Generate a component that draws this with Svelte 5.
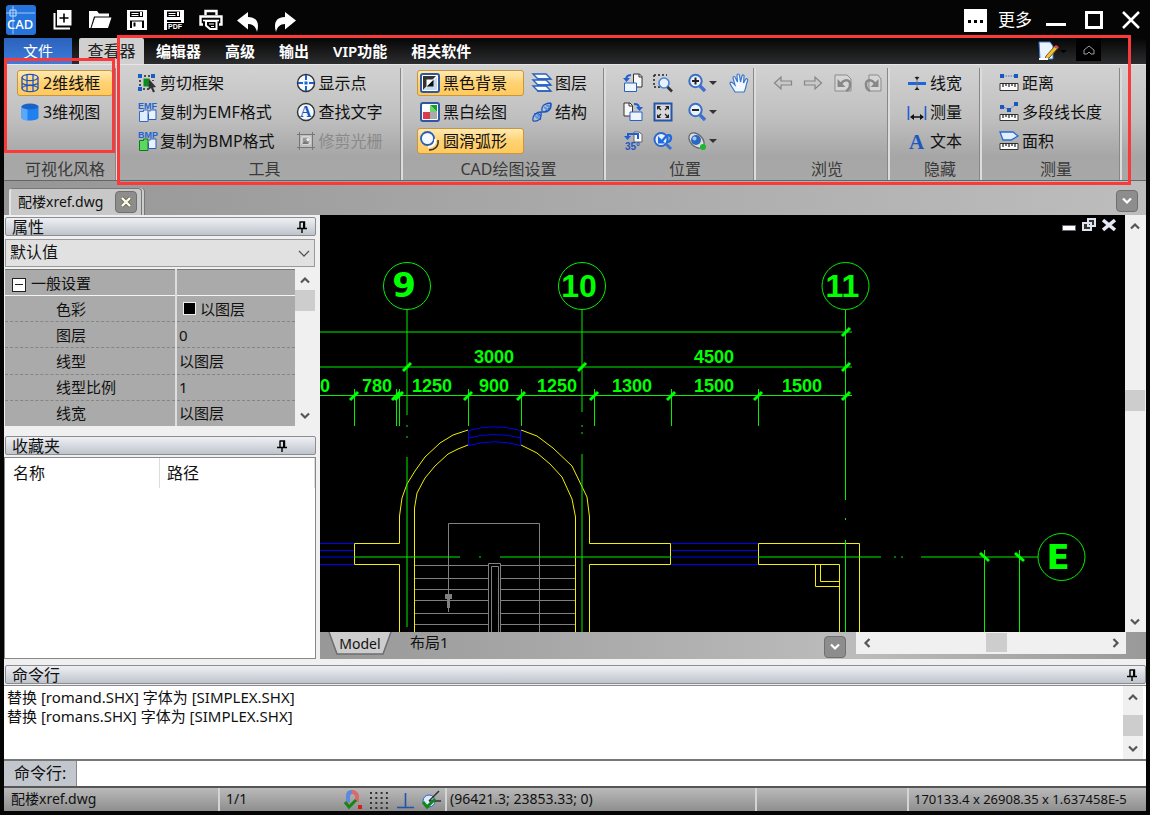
<script>
  let activeTab = $state('查看器');
  let command = $state('');
  let preset = $state('默认值');

  const tabs = ['查看器', '编辑器', '高级', '输出', 'VIP功能', '相关软件'];

  const quick = [
    { icon: 'new', label: '新建' },
    { icon: 'open', label: '打开' },
    { icon: 'save', label: '保存' },
    { icon: 'pdf', label: '保存为PDF' },
    { icon: 'print', label: '打印' },
    { icon: 'undo', label: '撤销' },
    { icon: 'redo', label: '重做' },
  ];

  const groups = [
    {
      name: 'style', title: '可视化风格', columns: [
        [{ icon: 'wire', text: '2维线框', on: true }, { icon: 'solid', text: '3维视图' }],
      ],
    },
    {
      name: 'tools', title: '工具', columns: [
        [{ icon: 'clip', text: '剪切框架' }, { icon: 'emf', text: '复制为EMF格式' }, { icon: 'bmp', text: '复制为BMP格式' }],
        [{ icon: 'point', text: '显示点' }, { icon: 'find', text: '查找文字' }, { icon: 'raster', text: '修剪光栅', disabled: true }],
      ],
    },
    {
      name: 'settings', title: 'CAD绘图设置', columns: [
        [{ icon: 'black', text: '黑色背景', on: true }, { icon: 'mono', text: '黑白绘图' }, { icon: 'smooth', text: '圆滑弧形', on: true }],
        [{ icon: 'layers', text: '图层' }, { icon: 'structure', text: '结构' }],
      ],
    },
    {
      name: 'position', title: '位置', icons: [
        { icon: 'rotLeft', text: '向左旋转' }, { icon: 'zoomWin', text: '窗口缩放' }, { icon: 'zoomIn', text: '放大', menu: true }, { icon: 'hand', text: '平移' },
        { icon: 'rotRight', text: '向右旋转' }, { icon: 'fit', text: '适合窗口' }, { icon: 'zoomOut', text: '缩小', menu: true }, null,
        { icon: 'angle', text: '旋转角度' }, { icon: 'zoomPrev', text: '上次缩放' }, { icon: 'orbit', text: '视图', menu: true }, null,
      ],
    },
    {
      name: 'browse', title: '浏览', icons: [
        { icon: 'back', text: '后退', disabled: true }, { icon: 'forward', text: '前进', disabled: true },
        { icon: 'prev', text: '上一视图', disabled: true }, { icon: 'next', text: '下一视图', disabled: true },
      ],
    },
    {
      name: 'hide', title: '隐藏', columns: [
        [{ icon: 'weight', text: '线宽' }, { icon: 'dim', text: '测量' }, { icon: 'text', text: '文本' }],
      ],
    },
    {
      name: 'measure', title: '测量', columns: [
        [{ icon: 'distance', text: '距离' }, { icon: 'polyline', text: '多段线长度' }, { icon: 'area', text: '面积' }],
      ],
    },
  ];

  const properties = [
    { name: '色彩', value: '以图层', swatch: true },
    { name: '图层', value: '0' },
    { name: '线型', value: '以图层' },
    { name: '线型比例', value: '1' },
    { name: '线宽', value: '以图层' },
  ];

  const log = [
    '替换 [romand.SHX] 字体为 [SIMPLEX.SHX]',
    '替换 [romans.SHX] 字体为 [SIMPLEX.SHX]',
  ];

  // drawing data
  const axes = [
    { x: 407, label: '9', font: 'wide', end: 415 },
    { x: 582, label: '10', end: 412 },
    { x: 845.5, label: '11', end: 500 },
  ];
  const dims = [
    { x: 494, y: 363, t: '3000' }, { x: 714, y: 363, t: '4500' },
    { x: 377, y: 392, t: '780' }, { x: 432, y: 392, t: '1250' }, { x: 494, y: 392, t: '900' },
    { x: 557, y: 392, t: '1250' }, { x: 632, y: 392, t: '1300' }, { x: 714, y: 392, t: '1500' },
    { x: 802, y: 392, t: '1500' },
  ];
  const drops = [354, 396, 399, 468, 521, 594, 671, 758];
  const ticks = [
    ...drops.map((x) => [x, 396]), [846, 396], [407, 367], [582, 367], [846, 367], [846, 332],
  ];
  const stairs = [565, 578, 589, 600, 613, 624];

  const thin = 'fill="none" stroke="#1f55c0" stroke-width="1.3"';
  const small = 'font-weight="700" font-family="Liberation Sans, sans-serif"';
  const lens = '<circle cx="8.500" cy="8" r="6.200" fill="#e8f2ff" stroke="#3c6fc4" stroke-width="2"/><path d="M13 13l5 5" stroke="#3a70d0" stroke-width="3.400"/>';
  const ruler = (y, h) => `<path d="M1 ${y}.5h18v${h}H1z" fill="#fafafa" stroke="#333"/><path d="M4 ${y}v4M7 ${y}v3M10 ${y}v4M13 ${y}v3M16 ${y}v4" stroke="#222" stroke-width="1.200"/>`;
  const pages = (c, s) => `<path d="M2.500 9.500h4V8H11v11.500H2.500z" fill="${c}" stroke="${s}"/><path d="M13 9.500V8h6v9.500h-7.500v-6" fill="#eaf2ff" stroke="#2a5cc0"/>`;

  const icons = {
    new: '<path d="M6 2h14.500v15.500H6z" fill="#fff"/><path d="M13 5.500v9M8.500 10h9" stroke="#000" stroke-width="1.600"/><path d="M3.500 5v15.500H19" fill="none" stroke="#fff" stroke-width="2"/>',
    open: '<path d="M1 20V3h8l2 2.500h10v3H6L2.500 20z" fill="#fff"/><path d="M7 9.500h16.500L20 20H3.500z" fill="#fff"/>',
    save: '<path d="M2 2h20v20H2z" fill="#fff"/><path d="M5 3.500h13V9H5zM5 12.500h14V20H5z" fill="#000"/><path d="M6.500 5h7v1h-7zM6.500 7h7v1h-7zM15 4h2v4h-2zM7 13.500h10V20H7z" fill="#fff"/><path d="M9.500 14.500v4" stroke="#000" stroke-width="2"/>',
    pdf: '<path d="M2 2h20v20H2z" fill="#fff"/><path d="M5 3.500h13V9H5zM5 12h14v2H5z" fill="#000"/><path d="M6.500 5h7v1h-7zM6.500 7h7v1h-7zM15 4h2v4h-2z" fill="#fff"/><path d="M5 15h17v7H5z" fill="#000"/><text x="6" y="21" font-size="7" ' + small + ' fill="#fff">PDF</text>',
    print: '<path d="M6.500 7V3h11v4M4 16.500H1.500V8.500h21v8H20" fill="none" stroke="#fff" stroke-width="2.400"/><path d="M7 13h10.500v8H11l-4-3.500z" fill="#000" stroke="#fff" stroke-width="2"/><path d="M4 12.500h16" stroke="#fff" stroke-width="1.600"/><path d="M10 16h5M12 18.500h3" stroke="#fff"/>',
    undo: '<path d="M12 4v5c8 0 12 5 9 15-1-5-4-8-9-8v5.500L1 12.500z" fill="#fff"/>',
    redo: '<path d="M12 4v5C4 9 0 14 3 24c1-5 4-8 9-8v5.500l11-9z" fill="#fff"/>',
    wire: `<ellipse cx="10" cy="4.500" rx="8" ry="3.200" ${thin}/><ellipse cx="10" cy="15.500" rx="8" ry="3.200" ${thin}/><path d="M2 4.500v11M18 4.500v11M7 1.500v17M13 1.500v17M2 10c3 3 13 3 16 0" ${thin}/>`,
    solid: '<path d="M1.500 4.500v11c0 4 17 4 17 0v-11z" fill="#1f80f0"/><path d="M1.500 4.500v11c0 2 3 3 6 3v-12z" fill="#59a8ff"/><ellipse cx="10" cy="4.500" rx="8.500" ry="3" fill="#1a62c8"/>',
    clip: '<path d="M3 3h13M3 3v13h9M16 3v5" fill="none" stroke="#222" stroke-dasharray="2 2" stroke-width="1.500"/><path d="M1 1h4v4H1zM14 1h4v4h-4zM1 14h4v4H1z" fill="#1d5cc8"/><path d="M6.500 5.500h6v8h-6z" fill="#0b8a1e"/><path d="M12 6l7 8-3 .5 2 4-2 1-2-4.500-2.500 2z" fill="#333"/>',
    emf: `<text x="1" y="7" font-size="9" ${small} fill="#1f66d0">EMF</text>` + pages('#e0edff', '#3568c8'),
    bmp: `<text x="1" y="7" font-size="9" ${small} fill="#1f66d0">BMP</text>` + pages('#5ad860', '#0f7a20'),
    point: '<circle cx="10" cy="10" r="8.500" fill="#f4f9ff" stroke="#333" stroke-width="1.400"/><path d="M10 2v5M10 13v5M2 10h5M13 10h5" stroke="#1f60d0" stroke-width="2"/><path d="M8.500 8.500h3v3h-3z" fill="#1f60d0"/>',
    find: '<circle cx="10" cy="10" r="8.500" fill="#f4f9ff" stroke="#333" stroke-width="1.400"/><text x="4" y="15" font-size="16" font-weight="700" font-family="Liberation Serif, serif" fill="#1c57c0">A</text>',
    raster: '<path d="M3.500 1v18M1 3.500h18M16.500 1v18M1 16.500h18" fill="none" stroke="#777"/><path d="M4 4h12v12H4z" fill="#bdbdbd"/><path d="M6 6h8v7H6z" fill="#999" stroke="#eee"/><circle cx="12" cy="8.500" r="1.500" fill="#eee"/><path d="M6 13l3-3 4 3z" fill="#777"/>',
    black: '<rect x="1" y="1" width="18" height="18" rx="2" fill="#fff" stroke="#2e57a0" stroke-width="2"/><path d="M3 3h13L3 17z" fill="#333"/><path d="M17 4v13H4z" fill="#c4d8ee"/><path d="M6.500 13.500l7-7v7z" fill="#111"/><path d="M6.500 13.500l7-7h-7z" fill="#fff"/>',
    mono: '<rect x="1" y="1" width="18" height="18" rx="2" fill="#fff" stroke="#2e57a0" stroke-width="2"/><path d="M3 10h7v7H3z" fill="#d93c4a"/><path d="M10 10h7v7h-7z" fill="#aaa"/><path d="M10 3h7v7z" fill="#16a02c"/><path d="M10 3v7h7z" fill="#6bd46d"/>',
    smooth: '<circle cx="7.500" cy="7.500" r="6.500" fill="#f4f9ff" stroke="#2a5db8" stroke-width="1.800"/><path d="M15 8c1 5-2 8-7 8" fill="none" stroke="#fff" stroke-width="2"/><path d="M18 9c1 6-3 10-9 10" fill="none" stroke="#333" stroke-width="1.500"/>',
    layers: [1, 7, 13].map((y) => `<path d="M1 ${y}h13l5 5H6z" fill="#f8fbff" stroke="#2a62be" stroke-width="1.400"/><path d="M5 ${y + 5}h14" stroke="#2a62be" stroke-width="1.500"/>`).join(''),
    structure: `<path d="M1 19c-1-6 4-9 8-9s9-2 10-9M2 12c4-2 8 1 6 6M10 9c-1-6 4-8 9-8M19 1c1 6-3 10-8 9M1 19c6 1 9-3 8-9" ${thin}/><path d="M3 14l4 3M5 12l3 3M12 5l4 3M14 3l4 2" stroke="#5990e8" stroke-width="2"/>`,
    rotLeft: '<path d="M10.500 1h6l2.500 2.500V14h-8.500z" fill="#f8f8f8" stroke="#333"/><path d="M16 1v3h3" fill="none" stroke="#333"/><path d="M1.500 10h12v8.500h-12z" fill="#eef5ff" stroke="#2a62be"/><path d="M8 2C5 2 3 3 3 7" fill="none" stroke="#1f5fd0" stroke-width="2"/><path d="M0 5h7L3.500 9z" fill="#1f5fd0"/>',
    rotRight: '<path d="M1 1h6l2.500 2.500V14H1z" fill="#f8f8f8" stroke="#333"/><path d="M6 1v3h3" fill="none" stroke="#333"/><path d="M7 10h12v8.500H7z" fill="#eef5ff" stroke="#2a62be"/><path d="M11 2c4 0 5 1 5 5" fill="none" stroke="#1f5fd0" stroke-width="2"/><path d="M13 5h7l-3.500 4z" fill="#1f5fd0"/>',
    angle: '<path d="M11 1h5l3 2.500V11h-8z" fill="#f8f8f8" stroke="#666"/><path d="M15 8V3H5v3" fill="none" stroke="#1f5fd0" stroke-width="2"/><path d="M1 5h7L4.500 9z" fill="#1f5fd0"/><text x="2" y="19" font-size="10" ' + small + ' fill="#1f55c0">35°</text>',
    zoomWin: '<path d="M1 2h13M1 2v12h7" fill="none" stroke="#222" stroke-dasharray="2 2" stroke-width="1.500"/><circle cx="11" cy="10" r="5" fill="#e8f2ff" stroke="#4a86dc" stroke-width="1.600"/><path d="M14.500 14l4.500 4.500" stroke="#333" stroke-width="2.600"/>',
    fit: '<path d="M1.500 1.500h17v17h-17z" fill="#d8d8d8" stroke="#2455a8" stroke-width="2"/><path d="M4 4h4L4 8zM16 4v4l-4-4zM4 16v-4l4 4zM16 16h-4l4-4z" fill="#222"/><path d="M5 5l3 3M15 5l-3 3M5 15l3-3M15 15l-3-3" stroke="#222" stroke-width="1.200"/>',
    zoomPrev: '<circle cx="8" cy="8.500" r="6.500" fill="#e8f2ff" stroke="#2a68d0" stroke-width="2"/><path d="M13 13l5 5" stroke="#3a70d0" stroke-width="3"/><path d="M9 10l3.500-4C15 3 18 4 18 7s-2 4-4 4" fill="none" stroke="#1f6be0" stroke-width="2.400"/><path d="M5 5v7.500h7.500z" fill="#1f6be0"/>',
    zoomIn: lens + '<path d="M8.500 4.500v7M5 8h7" stroke="#222" stroke-width="2"/>',
    zoomOut: lens + '<path d="M5 8h7" stroke="#222" stroke-width="2"/>',
    orbit: '<ellipse cx="9.500" cy="9.500" rx="9" ry="6" transform="rotate(45 9.500 9.500)" fill="#ddd" stroke="#666" stroke-width="1.300"/><circle cx="9" cy="9" r="5" fill="#2a68c0"/><circle cx="7.500" cy="7.500" r="2" fill="#9cc8ff"/><circle cx="16" cy="16" r="3" fill="#18b830"/>',
    hand: '<path d="M6 19C4 15 1 12 1 10c1-2 3 0 5 2L4 5c0-2 2-2 2.500 0L8.500 9 8 2.500c0-2 2-2 2.500 0L11.500 9l1.500-6c.5-2 2.500-1 2 .5L14.500 10l2-3.500c1-1.500 3-.5 2 1.500C16.500 13 17 16 15 19z" fill="#f2f8ff" stroke="#3c76cc" stroke-width="1.200"/>',
    back: '<path d="M1.500 10L8 4v4h10.500v4H8v4z" fill="#c8c8c8" stroke="#858585" stroke-width="1.200"/>',
    forward: '<path d="M18.500 10L12 4v4H1.500v4H12v4z" fill="#c8c8c8" stroke="#858585" stroke-width="1.200"/>',
    prev: '<path d="M2 2h12l4 4v12H2z" fill="#d6d6d6" stroke="#8b8b8b"/><path d="M7 13c3-8 11-7 10-1 0 3-2 5-4 6" fill="none" stroke="#888" stroke-width="2.500"/><path d="M4.500 6v8h8z" fill="#888"/>',
    next: '<path d="M6 2h9l3 4v12H6z" fill="#d6d6d6" stroke="#8b8b8b"/><path d="M13 13C10 5 2 6 3 12c0 3 2 5 4 6" fill="none" stroke="#888" stroke-width="2.500"/><path d="M15.500 6v8h-8z" fill="#888"/>',
    weight: '<path d="M1 9h18v3H1z" fill="#1f66d8"/><path d="M10 3v14" stroke="#777"/><path d="M7.500 4h5L10 7zM7.500 17h5L10 14z" fill="#222"/>',
    dim: '<path d="M1.500 4v14M18.500 4v14" stroke="#1f5fd0" stroke-width="1.600"/><path d="M4 15h12" stroke="#111" stroke-width="1.500"/><path d="M3 15l4-3v6zM17 15l-4-3v6z" fill="#111"/>',
    text: '<text x="2" y="18" font-size="21" font-weight="700" font-family="Liberation Serif, serif" fill="#1c57c0">A</text>',
    distance: '<path d="M4 3h12" stroke="#3a78d8" stroke-dasharray="1.500 1"/><path d="M1 1h4v4H1zM15 1h4v4h-4z" fill="#1c57c0"/>' + ruler(10, 7),
    polyline: '<path d="M3 4l7 4 7-6" fill="none" stroke="#3a78d8" stroke-dasharray="1.500 1"/><path d="M1 3h4v4H1zM8 6h4v4H8zM15 0h4v4h-4z" fill="#1c57c0"/>' + ruler(12, 6),
    area: '<path d="M1 1h13l5 4-7 4H4z" fill="#e2efff" stroke="#2a68d0" stroke-width="1.300"/>' + ruler(12, 6),
  };
</script>

{#snippet icon(name, box = 20)}
  <svg class="icon" width={box} height={box} viewBox="0 0 {box} {box}" aria-hidden="true">{@html icons[name]}</svg>
{/snippet}

{#snippet chevron(dir)}
  <svg class="chevron {dir}" width="12" height="12" viewBox="0 0 12 12" aria-hidden="true">
    <path d="M2 8.500L6 4.500l4 4" fill="none" stroke="currentColor" stroke-width="2.200" />
  </svg>
{/snippet}

{#snippet pin()}
  <button class="pin" aria-label="固定">
    <svg width="10" height="12" viewBox="0 0 10 12">
      <path d="M2.500 1h5v6M3 1v6M0 7.500h10M5 8v4" fill="none" stroke="#000" stroke-width="1.400" />
      <path d="M6 1h2v6H6z" />
    </svg>
  </button>
{/snippet}

<div class="app">
  <header class="titlebar">
    <svg class="logo" width="30" height="30" viewBox="0 0 30 30" aria-hidden="true">
      <rect width="30" height="30" rx="3" fill="#2474dc" />
      <path d="M0 8h29M7 1v28" stroke="#9cc8ff" />
      <path d="M4 5h6v6H4z" fill="none" stroke="#c4e0ff" />
      <text x="1" y="24" font-size="13" font-weight="500" fill="#fff" font-family="Noto Sans, sans-serif">CAD</text>
    </svg>
    <div class="quick">
      {#each quick as q}
        <button aria-label={q.label}>{@render icon(q.icon, 24)}</button>
      {/each}
    </div>
    <div class="window-buttons">
      <button class="more">
        <svg width="23" height="23" viewBox="0 0 23 23" aria-hidden="true">
          <path d="M0 0h23v23H0z" fill="#fff" />
          <path d="M4 11h3v3H4zM10 11h3v3h-3zM16 11h3v3h-3z" fill="#000" />
        </svg>
        更多
      </button>
      <button aria-label="最小化"><svg width="20" height="20"><path d="M0 14.500h20" stroke="#fff" stroke-width="3" /></svg></button>
      <button aria-label="最大化"><svg width="18" height="18"><path d="M1.500 1.500h15v15h-15z" fill="none" stroke="#fff" stroke-width="3" /></svg></button>
      <button aria-label="关闭"><svg width="18" height="18"><path d="M1 1l16 16M17 1L1 17" stroke="#fff" stroke-width="2.500" /></svg></button>
    </div>
  </header>

  <div class="ribbon">
    <nav class="tabs">
      <button class="file">文件</button>
      {#each tabs as tab}
        <button class:active={tab === activeTab} onclick={() => (activeTab = tab)}>{tab}</button>
      {/each}
      <div class="tab-tools">
        <button aria-label="样式">
          <svg width="30" height="20" viewBox="0 0 30 20">
            <path d="M2 1h11l3 4v13H3z" fill="#eaf4ff" stroke="#3a78d0" />
            <path d="M9 15L18 5l3 2-9 10-4 1z" fill="#f2c230" stroke="#775b18" />
            <path d="M17 6l2-2 3 2-2 2z" fill="#e04848" />
            <path d="M2 18h9" stroke="#fff" stroke-width="2" />
            <path d="M23 9h7l-3.500 3z" fill="#000" />
          </svg>
        </button>
        <button class="collapse" aria-label="折叠功能区">
          <svg width="12" height="12" viewBox="0 0 12 12"><path d="M1 6l5-4 5 4M1 6v4h3l2-2 2 2h3V6" fill="none" stroke="#999" /></svg>
        </button>
      </div>
    </nav>
    <div class="panel">
      {#each groups as g}
        <section class="group {g.name}">
          <div class="items">
            {#if g.columns}
              {#each g.columns as col}
                <div class="column">
                  {#each col as item}
                    <button class="command" class:on={item.on} disabled={item.disabled}>
                      {@render icon(item.icon)}{item.text}
                    </button>
                  {/each}
                </div>
              {/each}
            {:else}
              {#each g.icons as item}
                {#if item}
                  <button class="icon-button" aria-label={item.text} disabled={item.disabled}>
                    {@render icon(item.icon)}
                    {#if item.menu}<span class="caret"></span>{/if}
                  </button>
                {:else}
                  <span></span>
                {/if}
              {/each}
            {/if}
          </div>
          <h2>{g.title}</h2>
        </section>
      {/each}
    </div>
    <div class="mark mark-style"></div>
    <div class="mark mark-groups"></div>
  </div>

  <div class="documents">
    <div class="doc-tab">
      配楼xref.dwg
      <button class="small-button" aria-label="关闭文档">
        <svg width="12" height="12"><path d="M2 2l8 8M10 2l-8 8" stroke="#77703f" stroke-width="4" /><path d="M2 2l8 8M10 2l-8 8" stroke="#fff" stroke-width="2.200" /></svg>
      </button>
    </div>
    <button class="small-button" aria-label="文档列表">{@render chevron('down')}</button>
  </div>

  <main>
    <aside>
      <div class="caption"><h3>属性</h3>{@render pin()}</div>
      <div class="preset">
        <select bind:value={preset} aria-label="对象">
          <option>默认值</option>
        </select>
        <svg width="12" height="12" viewBox="0 0 12 12"><path d="M1 4l5 5 5-5" fill="none" stroke="#555" stroke-width="1.300" /></svg>
      </div>
      <div class="grid-box">
        <table class="properties">
          <thead>
            <tr><th><button class="fold" aria-label="折叠"></button>一般设置</th><th></th></tr>
          </thead>
          <tbody>
            {#each properties as p}
              <tr>
                <td>{p.name}</td>
                <td>{#if p.swatch}<span class="swatch"></span>{/if}{p.value}</td>
              </tr>
            {/each}
          </tbody>
        </table>
        <div class="scroll">
          <button aria-label="向上">{@render chevron('up')}</button>
          <div class="thumb"></div>
          <button class="last" aria-label="向下">{@render chevron('down')}</button>
        </div>
      </div>
      <div class="caption favourites-caption"><h3>收藏夹</h3>{@render pin()}</div>
      <div class="favourites">
        <table>
          <thead><tr><th>名称</th><th>路径</th></tr></thead>
        </table>
      </div>
    </aside>

    <div class="view">
      <div class="canvas">
        <svg class="drawing" viewBox="320 215 805 417" preserveAspectRatio="xMinYMin slice">
          <g stroke="#0000f0" fill="none">
            <path d="M320 543.500h34M320 550.500h34M320 564.500h34M671 543.500h87M671 550.500h87M671 564.500h87" />
            <path d="M468.500 430.500Q495 423 520.500 430.500V445.500Q495 438 468.500 445.500zM468.500 438Q495 431 520.500 438" />
          </g>
          <g stroke="#808080" fill="none">
            <path d="M448.500 612V523.500H539.500V632" />
            {#each stairs as y}
              <path d="M415 {y}.500H488M501 {y}.500H575" />
            {/each}
            <path d="M488.500 632V563.500H500.500V632M491.500 632V566.500H498.500V632" />
            <path d="M445 594h7v5h-2v9h-3v-9h-2z" fill="#808080" stroke="none" />
          </g>
          <g stroke="#f0f000" fill="none">
            <path d="M354.500 543.500H399.500V516L402 498L407 484L415 471L425 457L440 443L453 435L468 430" />
            <path d="M354.500 543.500V564.500H399.500V632" />
            <path d="M414.500 632V508L417 493L425 478L435 466L448 454L458 449L468 445" />
            <path d="M521 430L537 436L553 448L572 466L587 497L589.500 517V543.500H670.500V564.500H589.500V632" />
            <path d="M521 445L537 453L550 464L562 477L572 499L575.500 517V632" />
            <path d="M839.500 632V564.500H758.500V543.500H859.500V632" />
            <path d="M815.500 564.500V586.500H839.500M820.500 564.500V581.500H839.500" />
          </g>
          <g stroke="#00f000" fill="none">
            {#each axes as a}
              <circle cx={a.x} cy="286" r="23.500" />
              <path d="M{a.x} 310V{a.end}" />
            {/each}
            <path d="M407 425v2M407 436v2M407 457V627M582 425v2M582 432v2M582 454V632M845.500 518v2M845.500 540V632" />
            <path d="M320 332H852M320 367H852" />
            <path d="M320 395.500H852" />
            <path d="M354 557H460M479 557h2M500 557H671M758 557H881M894 557h2M901 557h2M921 557H1038" />
            {#each drops as x}
              <path d="M{x}.500 389V426" />
            {/each}
            <path d="M984.500 550V632M1019.500 550V632" />
            <circle cx="1061.500" cy="557" r="23.500" />
          </g>
          <path d="M320 557H354M671 557H758" stroke="#0000f0" />
          <g stroke="#00ff00" stroke-width="3">
            {#each ticks as [x, y]}
              <path d="M{x - 4} {y + 4}L{x + 4} {y - 4}" />
            {/each}
            <path d="M980 553L989 561M1015 553L1024 561" />
          </g>
          <g class="numbers">
            <text x="320" y="392">0</text>
            {#each dims as d}
              <text x={d.x} y={d.y} text-anchor="middle">{d.t}</text>
            {/each}
          </g>
          <g class="bubbles">
            {#each axes as a}
              <text class:wide={a.font} x={a.x - 3} y="297" text-anchor="middle">{a.label}</text>
            {/each}
            <text class="wide" x="1058" y="569" text-anchor="middle">E</text>
          </g>
        </svg>
        <div class="mdi">
          <button aria-label="最小化视图"><svg width="14" height="14"><path d="M.5 7.500h13v5H.5z" fill="#fff" stroke="#667" /></svg></button>
          <button aria-label="还原视图"><svg width="14" height="14"><path d="M6 1h7v7H6zM1 5h8v7H1z" fill="#333" stroke="#dde3f0" stroke-width="2" /></svg></button>
          <button aria-label="关闭视图"><svg width="14" height="14"><path d="M1 2l12 10M13 2L1 12" stroke="#e4e9f5" stroke-width="3.500" /></svg></button>
        </div>
      </div>
      <div class="scroll vertical">
        <button aria-label="向上">{@render chevron('up')}</button>
        <div class="thumb"></div>
        <button class="last" aria-label="向下">{@render chevron('down')}</button>
      </div>
      <div class="layouts">
        <button class="model">
          <svg width="64" height="24" viewBox="0 0 64 24" aria-hidden="true"><path d="M1 0l8 22h46l8-22" fill="#cdcdcd" stroke="#6d6d6d" stroke-width="1.500" /></svg>
          <span>Model</span>
        </button>
        <button class="layout">布局1</button>
        <button class="small-button" aria-label="布局列表">{@render chevron('down')}</button>
        <div class="scroll-h">
          <button aria-label="向左">{@render chevron('left')}</button>
          <div class="thumb"></div>
          <button class="last" aria-label="向右">{@render chevron('right')}</button>
        </div>
      </div>
    </div>
  </main>

  <div class="console">
    <div class="caption"><h3>命令行</h3>{@render pin()}</div>
    <div class="log">
      <div>
        {#each log as line}
          <p>{line}</p>
        {/each}
      </div>
      <div class="scroll">
        <button aria-label="向上">{@render chevron('up')}</button>
        <div class="thumb"></div>
        <button class="last" aria-label="向下">{@render chevron('down')}</button>
      </div>
    </div>
    <div class="prompt">
      <label for="command">命令行:</label>
      <input id="command" type="text" bind:value={command} />
    </div>
  </div>

  <footer>
    <span class="file-name">配楼xref.dwg</span>
    <span class="page">1/1</span>
    <div class="toggles">
      <button aria-label="对象捕捉">
        <svg width="20" height="20"><path d="M5 13V6q0-4 4-4t5 4v6" fill="none" stroke="#d86a6a" stroke-width="4" /><path d="M5 12V6q0-4 4-4" fill="none" stroke="#5b8be0" stroke-width="4" /><path d="M2 12l4 5 7-7" fill="none" stroke="#12861c" stroke-width="3" /><path d="M15 15h4v4h-4z" fill="#d81e1e" /></svg>
      </button>
      <button aria-label="栅格">
        <svg width="20" height="20"><path d="M1 3h18M1 8h18M1 13h18M1 18h18" stroke="#333" stroke-width="2" stroke-dasharray="2 3.300" /></svg>
      </button>
      <button aria-label="正交">
        <svg width="20" height="20"><path d="M10.500 3v14M2 17.500h17" stroke="#1f55b0" stroke-width="1.600" /></svg>
      </button>
      <button aria-label="极轴追踪">
        <svg width="20" height="20"><circle cx="8" cy="11" r="6" fill="#dcecff" stroke="#2a62be" /><path d="M8 11L18 1M8 11h12" stroke="#333" stroke-width="1.500" /><path d="M2 12l4 5 8-8" fill="none" stroke="#12861c" stroke-width="3" /></svg>
      </button>
    </div>
    <span class="coords">(96421.3; 23853.33; 0)</span>
    <span class="blank"></span>
    <span class="extents">170133.4 x 26908.35 x 1.637458E-5</span>
  </footer>
</div>

<style>
  :global(body) {
    margin: 0;
    background: #050505;
  }

  .app {
    box-sizing: border-box;
    min-height: 100vh;
    display: flex;
    flex-direction: column;
    padding-bottom: 4px;
    background: #050505;
    color: #111;
    font: 16px/20px 'Noto Sans', 'Noto Sans CJK SC', sans-serif;
  }

  button {
    display: inline-flex;
    align-items: center;
    justify-content: center;
    padding: 0;
    border: 0;
    background: none;
    color: inherit;
    font: inherit;
    white-space: nowrap;
  }

  svg {
    display: block;
    flex: none;
  }

  .icon {
    overflow: visible;
  }

  h2,
  h3,
  p {
    margin: 0;
    font-size: 16px;
    font-weight: 400;
  }

  /* title bar */
  .titlebar {
    display: flex;
    align-items: center;
    height: 38px;
    padding: 2px 10px 0 6px;
    box-sizing: border-box;
    color: #fff;
  }

  .quick {
    display: flex;
    gap: 13px;
    margin-left: 15px;
  }

  .window-buttons {
    display: flex;
    align-items: center;
    gap: 19px;
    margin-left: auto;
  }

  .more {
    gap: 11px;
    margin-right: -5px;
    font-size: 17px;
  }

  /* ribbon */
  .ribbon {
    position: relative;
  }

  .tabs {
    display: flex;
    height: 26px;
    margin: 0 4px;
    background: linear-gradient(#060606, #2c2d2f);
    color: #fff;
    font-size: 15px;
  }

  .tabs > button {
    padding: 0 12px;
    font-weight: 600;
  }

  .tabs > .file {
    width: 68px;
    margin-right: 7px;
    background: linear-gradient(#2c62bc, #3c7cdc);
    font-weight: 400;
  }

  .tabs > .active {
    width: 65px;
    padding: 0;
    border-radius: 2px 2px 0 0;
    background: #d0d0d0;
    color: #222;
    font-weight: 400;
    font-size: 16px;
  }

  .tab-tools {
    display: flex;
    gap: 9px;
    margin-left: auto;
    padding-right: 45px;
  }

  .collapse {
    width: 25px;
    height: 23px;
    background: #000;
  }

  .panel {
    display: flex;
    height: 115px;
    margin: 0 4px;
    border-top: 1px solid #e6e6e6;
    border-bottom: 1px solid #666;
    background: linear-gradient(#d2d2d2, #c0c0c0 45%, #a6a6a6 80%, #a8a8a8);
  }

  .group {
    display: flex;
    flex-direction: column;
    box-sizing: border-box;
    margin: 3px 0 0;
    border-right: 2px solid #dcdcdc;
    box-shadow: -1px 0 #888 inset;
  }

  .group h2 {
    margin-top: auto;
    height: 21px;
    padding-left: 10px;
    color: #3a3a3a;
    text-align: center;
  }

  .items {
    display: flex;
    padding-top: 2px;
  }

  .style { width: 114px; }
  .tools { width: 285px; }
  .settings { width: 203px; }
  .position { width: 150px; }
  .browse { width: 134px; }
  .hide { width: 92px; }
  .measure { width: 140px; }

  .style .items { padding-left: 13px; }
  .style .command { width: 96px; }
  .tools .items { padding-left: 16px; gap: 15px; }
  .settings .items { padding-left: 14px; gap: 5px; }
  .settings .column:first-child .command { width: 107px; }
  .hide .items { padding-left: 14px; }
  .measure .items { padding-left: 14px; }

  .position .items,
  .browse .items {
    display: grid;
    grid-auto-rows: 26px;
    gap: 3px 10px;
    padding-left: 17px;
  }

  .position .items { grid-template-columns: 20px 24px 32px 20px; }
  .browse .items { grid-template-columns: repeat(4, 20px); }

  .column {
    display: flex;
    flex-direction: column;
    align-items: flex-start;
    gap: 3px;
  }

  .command {
    justify-content: flex-start;
    gap: 3px;
    height: 26px;
    box-sizing: border-box;
    padding: 0 2px;
    border: 1px solid transparent;
    border-radius: 3px;
  }

  .command.on {
    border-color: #c9963c;
    background: linear-gradient(#ffe9b4, #ffd272 50%, #ffc95e);
  }

  .command:disabled {
    color: #8a8a8a;
  }

  .icon-button {
    justify-content: flex-start;
    gap: 2px;
  }

  .caret {
    border: 4px solid transparent;
    border-top-color: #333;
    border-bottom: 0;
  }

  /* highlighted areas lie over the ribbon */
  .mark {
    position: absolute;
    border: 3px solid #fa3a3a;
    pointer-events: none;
  }

  .mark-style {
    top: 20px;
    left: 4px;
    width: 105px;
    height: 89px;
  }

  .mark-groups {
    top: -3px;
    right: 19px;
    bottom: -4px;
    left: 117px;
  }

  /* document tabs */
  .documents {
    display: flex;
    align-items: center;
    justify-content: space-between;
    height: 34px;
    box-sizing: border-box;
    margin: 0 4px;
    padding: 5px 8px 0 0;
    background: linear-gradient(90deg, #969696, #bdbdbd);
  }

  .doc-tab {
    display: flex;
    align-items: center;
    gap: 12px;
    align-self: flex-end;
    height: 26px;
    margin-left: 5px;
    padding: 0 4px 0 7px;
    border: 1px solid #777;
    border-bottom: 0;
    border-left: 2px solid #e4e4e4;
    border-radius: 4px 4px 0 0;
    box-shadow: 2px 0 #ccc, 3px 0 #777;
    background: #c8c8c8;
    font-size: 14px;
  }

  .small-button {
    width: 22px;
    height: 22px;
    box-sizing: border-box;
    border: 1px solid #707070;
    border-radius: 4px;
    background: #8d8d8d;
    color: #fff;
  }

  .chevron.down { transform: rotate(180deg); }
  .chevron.left { transform: rotate(-90deg); }
  .chevron.right { transform: rotate(90deg); }

  /* work area */
  main {
    flex: 1;
    display: grid;
    grid-template-columns: 316px 1fr;
    margin: 0 4px;
    background: #f0f0f0;
  }

  aside {
    display: flex;
    flex-direction: column;
    padding: 2px 4px 0 0;
  }

  .caption {
    display: flex;
    align-items: center;
    justify-content: space-between;
    height: 17px;
    margin-left: 1px;
    padding: 0 8px 0 6px;
    border: 1px solid #8a8c92;
    border-radius: 2px;
    background: linear-gradient(#eef0f4, #bfc4cc);
  }

  .pin {
    width: 10px;
  }

  .preset {
    position: relative;
    margin: 3px 1px 0;
  }

  .preset select {
    display: block;
    width: 100%;
    height: 28px;
    padding: 0 4px 2px;
    border: 1px solid #999;
    border-radius: 0;
    background: #e1e1e1;
    color: #111;
    appearance: none;
    font: inherit;
  }

  .preset svg {
    position: absolute;
    top: 8px;
    right: 5px;
    pointer-events: none;
  }

  .grid-box {
    display: flex;
    height: 157px;
    margin: 2px 1px 0;
    background: #aaa;
  }

  .properties {
    flex: 1;
    border-collapse: collapse;
    font-size: 15px;
    table-layout: fixed;
  }

  .properties th,
  .properties td {
    height: 25px;
    padding: 0;
    border-bottom: 1px dashed #858585;
    font-weight: 400;
    text-align: left;
  }

  .properties th {
    border-top: 1px solid #777;
    border-bottom: 1px solid #f4f4f4;
  }

  .properties tr > :first-child {
    width: 59%;
    border-right: 2px solid #ddd;
  }

  .properties tr > :last-child {
    padding-left: 2px;
  }

  .properties td:first-child {
    padding-left: 51px;
  }

  .properties tbody tr:last-child td {
    border-bottom: 0;
  }

  .fold {
    width: 14px;
    height: 14px;
    box-sizing: border-box;
    margin: 0 5px 0 7px;
    border: 1px solid #222;
    background: linear-gradient(#222, #222) center / 8px 1px no-repeat #fff;
    vertical-align: -2px;
  }

  .swatch {
    display: inline-block;
    width: 11px;
    height: 11px;
    margin: 0 4px 0 4px;
    border: 1px solid #eee;
    background: #000;
  }

  .scroll {
    display: flex;
    flex-direction: column;
    width: 20px;
    background: #f0f0f0;
    color: #555;
  }

  .scroll button {
    height: 21px;
  }

  .scroll .last {
    margin-top: auto;
  }

  .thumb {
    height: 21px;
    background: #cdcdcd;
  }

  .favourites-caption {
    margin-top: 10px;
    padding-right: 28px;
  }

  .favourites {
    flex: 1;
    box-sizing: border-box;
    margin-top: 2px;
    border: 1px solid #888;
    background: #fff;
  }

  .favourites table {
    width: 100%;
    border-collapse: collapse;
  }

  .favourites th {
    height: 29px;
    padding: 0 7px 1px;
    border-right: 1px solid #ddd;
    font-weight: 400;
    text-align: left;
  }

  .favourites th:first-child {
    width: 139px;
    padding-left: 8px;
  }

  .view {
    display: grid;
    grid-template: 1fr 27px / 1fr 21px;
    min-width: 0;
  }

  .canvas {
    position: relative;
    overflow: hidden;
    background: #000;
  }

  .drawing {
    position: absolute;
    width: 100%;
    height: 100%;
  }

  .numbers text {
    fill: #00ff00;
    font: 700 18px 'Liberation Sans', sans-serif;
  }

  .bubbles text {
    fill: #00ff00;
    font: 700 32px 'Liberation Sans', sans-serif;
  }

  .bubbles .wide {
    font: 700 34px 'DejaVu Sans', sans-serif;
  }

  .mdi {
    position: absolute;
    top: 3px;
    right: 9px;
    display: flex;
    gap: 6px;
  }

  .vertical .thumb {
    margin-top: 154px;
  }

  .layouts {
    grid-column: 1 / 3;
    display: flex;
    align-items: center;
    padding-left: 8px;
    background: linear-gradient(90deg, #989898, #bcbcbc 65%, #999);
    font-size: 15px;
  }

  .model {
    display: grid;
    align-self: flex-start;
    margin-right: 18px;
    font-size: 14px;
  }

  .model > * {
    grid-area: 1 / 1;
  }

  .layout {
    align-self: flex-start;
  }

  .layouts .small-button {
    margin: 3px 10px 0 auto;
  }

  .scroll-h {
    display: flex;
    align-self: flex-start;
    width: 270px;
    height: 22px;
    margin-right: 20px;
    background: #f0f0f0;
    color: #555;
  }

  .scroll-h button {
    width: 21px;
  }

  .scroll-h .thumb {
    width: 21px;
    height: 19px;
    margin: 1px auto 0 109px;
  }

  /* command line */
  .console {
    margin: 0 4px;
    padding-top: 6px;
    background: #f0f0f0;
  }

  .log {
    display: flex;
    justify-content: space-between;
    height: 73px;
    margin-top: 1px;
    padding: 0 3px;
    border-top: 1px solid #888;
    border-bottom: 2px solid #777;
    background: #fff;
  }

  .log p {
    margin-top: 3px;
    font-size: 15px;
    line-height: 16px;
  }

  .log .thumb {
    margin-top: 8px;
  }

  .prompt {
    display: flex;
    height: 25px;
    background: #c2c7ce;
  }

  .prompt label {
    width: 62px;
    padding-left: 10px;
    line-height: 24px;
  }

  .prompt input {
    flex: 1;
    padding: 0 4px;
    border: 0;
    border-left: 1px solid #888;
    background: #fff;
    font: inherit;
    outline: none;
  }

  footer {
    display: flex;
    align-items: center;
    height: 23px;
    margin: 0 4px;
    border-top: 2px solid #555;
    background: linear-gradient(#bababa, #8e8e8e);
    font-size: 14px;
  }

  footer > span {
    box-sizing: border-box;
    height: 100%;
    border-right: 2px solid #d4d4d4;
    line-height: 22px;
    padding-left: 6px;
  }

  footer > .file-name { width: 216px; padding-left: 7px; }
  footer > .page { width: 122px; border-right: 0; }
  .toggles { display: flex; gap: 6px; padding: 0 4px 0 1px; }
  footer > .coords { flex: 1; border-left: 2px solid #d4d4d4; padding-left: 3px; }
  footer > .blank { width: 152px; }
  footer > .extents { width: 237px; border-right: 0; padding-left: 5px; font-size: 13px; }
</style>
